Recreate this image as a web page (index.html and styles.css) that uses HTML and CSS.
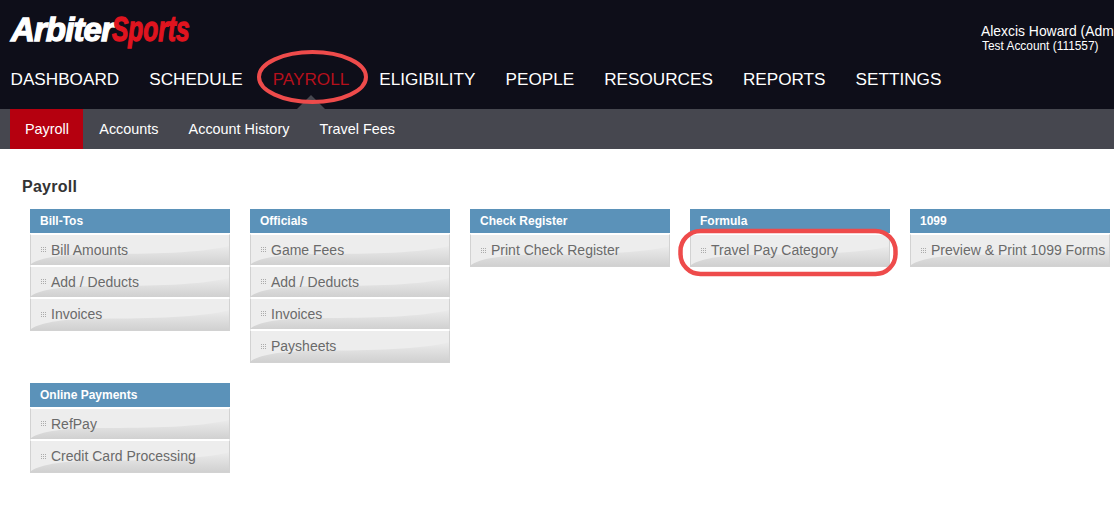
FILE: index.html
```html
<!DOCTYPE html>
<html lang="en">
<head>
<meta charset="utf-8">
<title>Payroll</title>
<link rel="stylesheet" href="styles.css">
</head>
<body>
<header class="masthead">
  <div class="top">
    <div class="logo"><span class="logo-a">Arbiter</span><span class="logo-b">Sports</span></div>
    <div class="user">
      <div class="user-name">Alexcis Howard (Adm</div>
      <div class="user-acct">Test Account (111557)</div>
    </div>
  </div>
  <nav class="mainnav">
    <a>DASHBOARD</a>
    <a>SCHEDULE</a>
    <a class="on">PAYROLL</a>
    <a>ELIGIBILITY</a>
    <a>PEOPLE</a>
    <a>RESOURCES</a>
    <a>REPORTS</a>
    <a>SETTINGS</a>
  </nav>
</header>
<nav class="subnav">
  <a class="on">Payroll</a>
  <a>Accounts</a>
  <a>Account History</a>
  <a>Travel Fees</a>
</nav>
<main class="content">
  <h1 class="title">Payroll</h1>
  <div class="panels">
    <section class="panel">
      <h2>Bill-Tos</h2>
      <a class="item"><i class="dots"></i>Bill Amounts</a>
      <a class="item"><i class="dots"></i>Add / Deducts</a>
      <a class="item"><i class="dots"></i>Invoices</a>
    </section>
    <section class="panel">
      <h2>Officials</h2>
      <a class="item"><i class="dots"></i>Game Fees</a>
      <a class="item"><i class="dots"></i>Add / Deducts</a>
      <a class="item"><i class="dots"></i>Invoices</a>
      <a class="item"><i class="dots"></i>Paysheets</a>
    </section>
    <section class="panel">
      <h2>Check Register</h2>
      <a class="item"><i class="dots"></i>Print Check Register</a>
    </section>
    <section class="panel">
      <h2>Formula</h2>
      <a class="item"><i class="dots"></i>Travel Pay Category</a>
    </section>
    <section class="panel">
      <h2>1099</h2>
      <a class="item"><i class="dots"></i>Preview &amp; Print 1099 Forms</a>
    </section>
    <section class="panel">
      <h2>Online Payments</h2>
      <a class="item"><i class="dots"></i>RefPay</a>
      <a class="item"><i class="dots"></i>Credit Card Processing</a>
    </section>
  </div>
</main>
<svg class="marks" width="1114" height="520" viewBox="0 0 1114 520" aria-hidden="true">
  <ellipse cx="312.5" cy="77" rx="53.5" ry="25" fill="none" stroke="#ee4b4b" stroke-width="4"/>
  <rect x="680.5" y="231" width="215" height="43" rx="20" fill="none" stroke="#ee4b4b" stroke-width="4.5"/>
</svg>
</body>
</html>
```
FILE: styles.css
```css
html, body { margin: 0; padding: 0; }
body {
  width: 1114px;
  height: 520px;
  overflow: hidden;
  position: relative;
  background: #fff;
  font-family: "Liberation Sans", Arial, sans-serif;
}
.masthead {
  height: 109px;
  background: #0e0e19;
  color: #fff;
  overflow: hidden;
  position: relative;
}
.top {
  display: flex;
  justify-content: space-between;
  height: 63px;
}
.logo {
  margin: 10px 0 0 11px;
  font-weight: 700;
  font-style: italic;
  line-height: 38px;
  white-space: nowrap;
}
.logo-a {
  color: #fff;
  font-size: 33px;
  letter-spacing: -0.9px;
  -webkit-text-stroke: 1.3px #fff;
}
.logo-b {
  display: inline-block;
  color: #e0141f;
  font-size: 35px;
  margin-left: -1px;
  transform: scaleX(0.7);
  transform-origin: left center;
  -webkit-text-stroke: 1.3px #e0141f;
}
.user {
  width: 133px;
  padding-top: 23px;
  white-space: nowrap;
}
.user-name { font-size: 13.9px; line-height: 16px; }
.user-acct { font-size: 11.9px; line-height: 14px; padding-left: 1px; }
.mainnav {
  display: flex;
  gap: 30px;
  padding-left: 10.5px;
  font-size: 17.17px;
  line-height: 20px;
  margin-top: 6px;
}
.mainnav .on { color: #b5101c; position: relative; }
.mainnav .on::after {
  content: "";
  position: absolute;
  left: 50%;
  bottom: -20px;
  margin-left: -14px;
  border: 14px solid transparent;
  border-top: 0;
  border-bottom-color: #46474f;
}
.subnav {
  height: 40px;
  background: #46474f;
  display: flex;
  padding-left: 10px;
  color: #fff;
  font-size: 14.4px;
  line-height: 40px;
}
.subnav a { padding: 0 15.05px; }
.subnav .on { background: #b5000f; padding: 0 14.25px 0 15px; margin-right: 1px; }
.content { padding: 29px 0 0 22px; }
.title {
  margin: 0 0 13px;
  font-size: 16px;
  line-height: 18px;
  font-weight: 700;
  color: #333;
  letter-spacing: 0.25px;
}
.panels {
  display: grid;
  grid-template-columns: repeat(5, 200px);
  column-gap: 20px;
  row-gap: 20px;
  margin-left: 8px;
}
.panel h2 {
  margin: 0 0 1px;
  height: 24px;
  padding-left: 10px;
  background: #5b92b9;
  color: #fff;
  font-size: 12px;
  line-height: 24px;
  font-weight: 700;
}
.item {
  display: flex;
  align-items: center;
  box-sizing: border-box;
  height: 32px;
  padding: 0 0 1px 10px;
  border: 1px solid #d2d2d2;
  border-top-color: #fff;
  border-bottom: 1px solid #fff;
  color: #6a6a6a;
  font-size: 14px;
  white-space: nowrap;
  background-color: #ededed;
  background-size: 100% 100%;
  background-image: url("data:image/svg+xml,%3Csvg xmlns='http://www.w3.org/2000/svg' width='198' height='30' preserveAspectRatio='none'%3E%3Cdefs%3E%3ClinearGradient id='g' x1='0' y1='0' x2='0' y2='1'%3E%3Cstop offset='0' stop-color='%23ebebeb'/%3E%3Cstop offset='1' stop-color='%23cfcfcf'/%3E%3C/linearGradient%3E%3C/defs%3E%3Cpath d='M0 31V29C10 22 35 19 70 19C120 19 170 18 198 11V31Z' fill='url(%23g)'/%3E%3C/svg%3E");
}
.item:last-child { border-bottom-color: #d2d2d2; height: 33px; }
.dots {
  flex: none;
  width: 5px;
  height: 5px;
  margin-right: 5px;
  background-image: radial-gradient(circle at 0.5px 0.5px, #aaa 0.7px, transparent 0.7px);
  background-size: 2px 2px;
}
.marks {
  position: absolute;
  left: 0;
  top: 0;
  pointer-events: none;
}
```
